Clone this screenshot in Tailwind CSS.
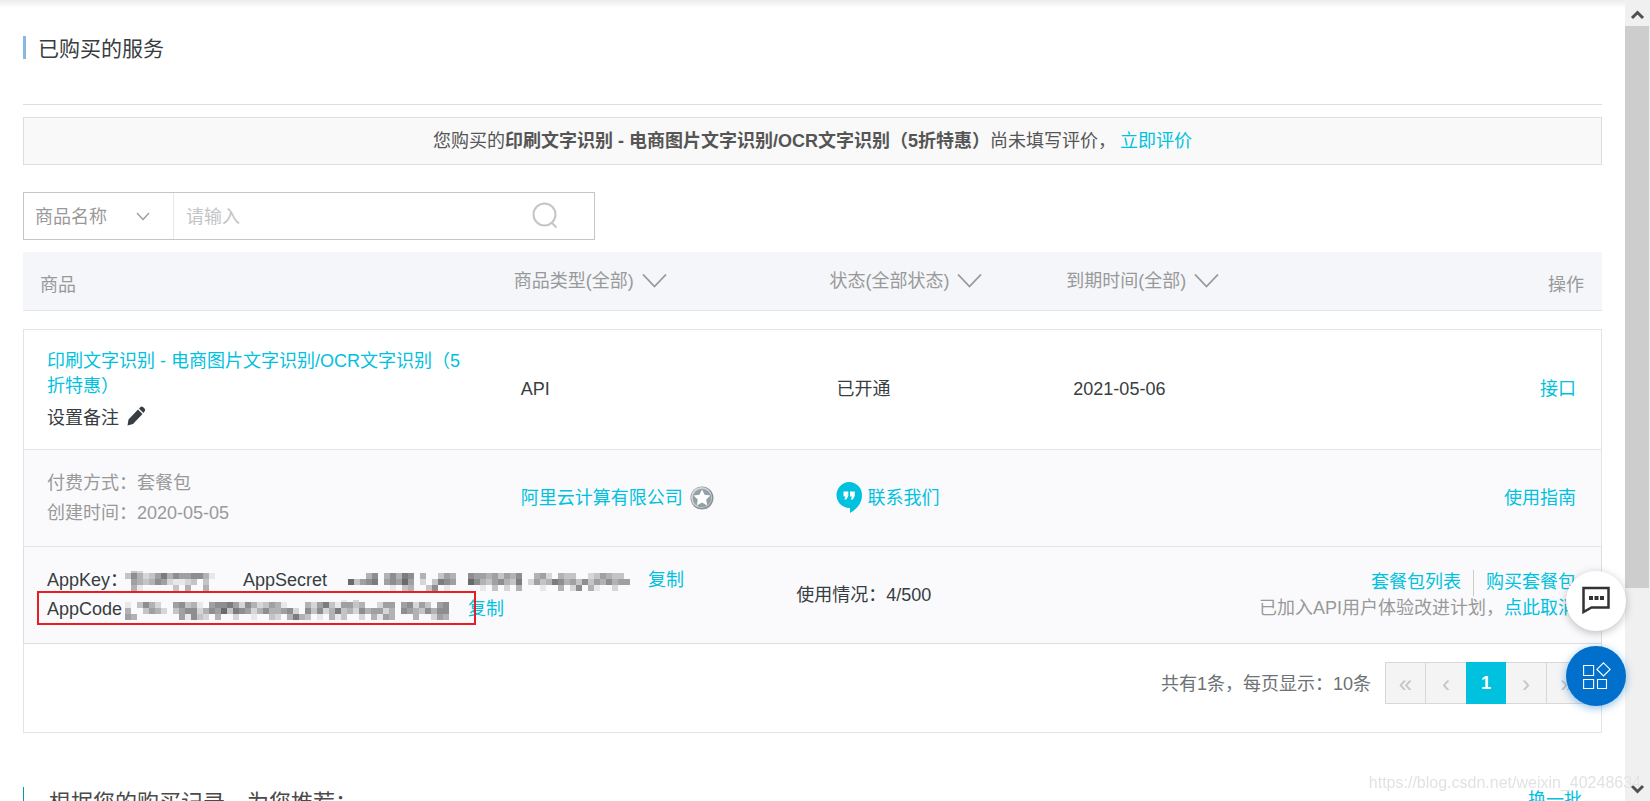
<!DOCTYPE html>
<html lang="zh-CN">
<head>
<meta charset="utf-8">
<title>已购买的服务</title>
<script src="https://cdn.jsdelivr.net/npm/@tailwindcss/browser@4"></script>
</head>
<body class="relative h-screen overflow-hidden bg-white font-['Liberation_Sans','Noto_Sans_CJK_SC',sans-serif] text-[18px] leading-[25px] text-[#373d41]">
<div class="absolute inset-x-0 top-0 h-2 bg-linear-to-b from-[#ececec] to-white"></div>

<main class="relative mr-[25px] pl-[23px] pr-[23px] pt-[34px]">
  <header class="flex h-[71px] items-start border-b border-[#dddddd]">
    <span class="mt-[2px] h-[23px] w-[3px] bg-[#88b7e0]"></span>
    <h1 class="ml-3 text-[21px] leading-[29px]">已购买的服务</h1>
  </header>

  <p class="mt-3 flex h-12 items-center justify-center border border-[#dddddd] bg-[#f9f9f9] text-[#555555]">
    <span>您购买的<b>印刷文字识别 - 电商图片文字识别/OCR文字识别（5折特惠）</b>尚未填写评价，</span>
    <a href="#review" class="ml-1 text-[#00c1de]">立即评价</a>
  </p>

  <form class="mt-[27px] flex h-12 w-[572px] border border-[#c3c5c6]" onsubmit="return false">
    <div class="relative w-[150px] border-r border-[#e6e8ea]">
      <select aria-label="搜索字段" class="h-full w-full appearance-none bg-transparent pl-[11px] pt-[2px] text-[#999999] outline-none">
        <option>商品名称</option>
      </select>
      <svg class="pointer-events-none absolute right-[23px] top-[19px]" width="14" height="9" viewBox="0 0 14 9" fill="none" stroke="#999" stroke-width="1.2"><path d="M1 1l6 6.500 6-6.500"/></svg>
    </div>
    <input type="text" aria-label="搜索内容" placeholder="请输入" class="min-w-0 flex-1 pl-3 pt-[2px] outline-none placeholder:text-[#c3c5c6]">
    <button type="submit" aria-label="搜索" class="mr-[34px]">
      <svg width="28" height="28" viewBox="0 0 28 28" fill="none" stroke="#c3c5c6" stroke-width="2"><circle cx="12.500" cy="12.500" r="11"/><path d="M19.500 20.500l5 5"/></svg>
    </button>
  </form>

  <table class="mt-3 w-full table-fixed border-separate border-spacing-0 text-left">
    <colgroup><col class="w-[30%]"><col class="w-[20%]"><col class="w-[15%]"><col class="w-[15%]"><col class="w-[20%]"></colgroup>
    <thead class="text-[#999999]">
      <tr class="h-[59px] bg-[#f4f6fa]">
        <th class="border-b border-[#dfe5ea] px-[17px] pt-2 font-normal">商品</th>
        <th class="border-b border-[#dfe5ea] pl-[17px] font-normal"><button class="flex items-center gap-2">商品类型(全部)<svg width="25" height="15" viewBox="0 0 25 15" fill="none" stroke="#999" stroke-width="1.800"><path d="M1 .5l11.500 12L24 .5"/></svg></button></th>
        <th class="border-b border-[#dfe5ea] pl-[17px] font-normal"><button class="flex items-center gap-2 whitespace-nowrap">状态(全部状态)<svg width="25" height="15" viewBox="0 0 25 15" fill="none" stroke="#999" stroke-width="1.800"><path d="M1 .5l11.500 12L24 .5"/></svg></button></th>
        <th class="border-b border-[#dfe5ea] pl-[17px] font-normal"><button class="flex items-center gap-2 whitespace-nowrap">到期时间(全部)<svg width="25" height="15" viewBox="0 0 25 15" fill="none" stroke="#999" stroke-width="1.800"><path d="M1 .5l11.500 12L24 .5"/></svg></button></th>
        <th class="border-b border-[#dfe5ea] pr-[18px] pt-2 text-right font-normal">操作</th>
      </tr>
    </thead>
    <tbody>
      <tr class="h-[18px]" aria-hidden="true"><td colspan="5"></td></tr>
      <tr class="h-[121px]">
        <td class="border-y border-l border-[#e1e4e8] pl-[23px] pr-6">
          <a href="#product" class="block text-[#00c1de]">印刷文字识别 - 电商图片文字识别/OCR文字识别（5折特惠）</a>
          <button class="mt-[7px] flex items-center gap-2">设置备注
            <svg class="mb-1" width="19" height="20" viewBox="0 0 19 20" fill="#373d41"><path d="M.5 19.500l1-6L11 3.500l4.500 4.500-9.500 10zM12 2.500l1.600-1.600q1.200-.9 2.400.1l1.700 1.700q1 1.200.1 2.400L16.400 7z"/></svg>
          </button>
        </td>
        <td class="border-y border-[#e1e4e8] pl-6">API</td>
        <td class="border-y border-[#e1e4e8] pl-6">已开通</td>
        <td class="border-y border-[#e1e4e8] pl-6">2021-05-06</td>
        <td class="border-y border-r border-[#e1e4e8] pr-[25px] text-right"><a href="#api" class="text-[#00c1de]">接口</a></td>
      </tr>
      <tr class="h-[97px] bg-[#fafafc]">
        <td class="border-b border-l border-[#dfe5e8] pl-[23px] leading-[30px] text-[#999999]">付费方式：套餐包<br>创建时间：2020-05-05</td>
        <td class="border-b border-[#dfe5e8] pl-6">
          <div class="flex items-center gap-[7px]"><a href="#vendor" class="text-[#00c1de]">阿里云计算有限公司</a>
            <svg width="24" height="24" viewBox="0 0 24 24"><circle cx="12" cy="12" r="11.500" fill="#8d9296"/><circle cx="11.500" cy="11.500" r="10.500" fill="#d3d6d8"/><circle cx="12" cy="12" r="9.300" fill="#93a1a8"/><path d="M12 3.400l2.600 5.300 5.800.8-4.200 4.100 1 5.800-5.200-2.800-5.200 2.800 1-5.800-4.200-4.100 5.800-.8z" fill="#fff"/></svg>
          </div>
        </td>
        <td class="border-b border-[#dfe5e8] pl-6" colspan="2">
          <a href="#contact" class="flex items-center gap-[5px] text-[#00c1de]">
            <svg width="26" height="32" viewBox="0 0 26 32"><path d="M13 0a13 13 0 0 1 13 13c0 8-5 14-12 18v-5A13 13 0 1 1 13 0z" fill="#00c1de"/><path d="M7.500 9.500h4.800v4.500l-2 3.500h-2l1.200-3h-2zM14 9.500h4.800v4.500l-2 3.500h-2l1.200-3h-2z" fill="#fff"/></svg>联系我们</a>
        </td>
        <td class="border-b border-r border-[#dfe5e8] pr-[25px] text-right"><a href="#guide" class="text-[#00c1de]">使用指南</a></td>
      </tr>
      <tr class="h-[97px] bg-[#fafafc]">
        <td colspan="5" class="border-x border-b border-[#dcdee2] pl-[23px] pr-[25px]">
          <div class="flex items-center">
            <div class="relative w-[49%] leading-[29px]">
              <div class="flex items-center">
                <span class="w-[78px] whitespace-nowrap">AppKey：</span>
                <svg data-mosaic="key" class="w-[96px]" height="20" aria-hidden="true"></svg>
                <span class="ml-[22px] w-[88px]">AppSecret</span>
                <svg data-mosaic="secret" class="ml-[17px] w-[284px]" height="20" aria-hidden="true"></svg>
                <a href="#copy-secret" class="ml-4 text-[#00c1de]">复制</a>
              </div>
              <div class="flex items-center">
                <span class="w-[78px]">AppCode</span>
                <svg data-mosaic="code" class="w-[330px]" height="20" aria-hidden="true"></svg>
                <a href="#copy-code" class="ml-[13px] text-[#00c1de]">复制</a>
              </div>
              <div class="pointer-events-none absolute -left-[10px] top-[25px] h-[34px] w-[439px] border-2 border-[#e81c24]"></div>
            </div>
            <div>使用情况：4/500</div>
            <div class="ml-auto flex flex-col items-end">
              <div class="flex items-center text-[#00c1de]"><a href="#packages">套餐包列表</a><span class="mx-3 h-[26px] w-px bg-[#cccccc]"></span><a href="#buy">购买套餐包</a></div>
              <div class="text-[#999999]">已加入API用户体验改进计划，<a href="#cancel" class="text-[#00c1de]">点此取消</a></div>
            </div>
          </div>
        </td>
      </tr>
    </tbody>
  </table>

  <div class="flex h-[89px] items-start justify-end border-x border-b border-[#e1e4e8] pr-[13px] pt-[18px]">
    <span class="mt-[10px] text-[#6d7274]">共有1条，每页显示：10条</span>
    <nav class="ml-[14px] flex h-[42px] border border-[#d7d8d9] bg-[#f4f4f4] text-[24px] text-[#c3c5c6]" aria-label="分页">
      <button class="w-10 border-r border-[#d7d8d9]" aria-label="首页">«</button>
      <button class="w-10" aria-label="上一页">‹</button>
      <button class="-my-px w-10 bg-[#00c1de] pt-px text-[18px] font-bold text-white" aria-current="page">1</button>
      <button class="w-[41px] border-r border-[#d7d8d9]" aria-label="下一页">›</button>
      <button class="w-10" aria-label="末页">»</button>
    </nav>
  </div>

  <section class="mt-[54px] flex items-start border-l border-[#0099ae]">
    <h2 class="ml-[25px] text-[22px] leading-[32px] text-[#4a4a4a]">根据您的购买记录，为您推荐：</h2>
    <a href="#more" class="ml-auto mr-5 mt-px text-[#00c1de]">换一批</a>
  </section>
</main>

<div class="fixed inset-y-0 right-0 flex w-[25px] flex-col bg-[#f0f0f0]" aria-hidden="true">
  <svg width="25" height="26" viewBox="0 0 25 26" fill="none" stroke="#505050" stroke-width="3"><path d="M7 18l5.500-5.500L18 18"/></svg>
  <div class="flex-1 pr-px"><div class="h-3/4 bg-[#cdcdcd]"></div></div>
  <svg width="25" height="26" viewBox="0 0 25 26" fill="none" stroke="#505050" stroke-width="3"><path d="M7 11l5.500 5.500L18 11"/></svg>
</div>

<div class="fixed bottom-[95px] right-[24px] flex flex-col gap-[15px]">
  <button aria-label="咨询" class="flex size-[60px] items-center justify-center rounded-full bg-white pb-[3px] shadow-[0_2px_8px_rgba(0,0,0,0.25)]">
    <svg width="28" height="28" viewBox="0 0 28 28" fill="none" stroke="#333" stroke-width="2.500"><path d="M1.500 2h25v19.500H9.500L1.500 26z"/><path d="M7 12h15" stroke-width="4" stroke-dasharray="4 1.500"/></svg>
  </button>
  <button aria-label="应用" class="flex size-[60px] items-center justify-center rounded-full bg-[#0070cc] pl-[2px] shadow-[0_2px_8px_rgba(0,112,204,0.45)]">
    <svg width="28" height="28" viewBox="0 0 28 28" fill="none" stroke="#fff" stroke-width="1.100"><path d="M.6 3.500h10v10h-10zM.6 17.500h10v9h-10zM14.500 17.500h9v9h-9zM20.500 .8l6.600 6.600-6.600 6.600-6.600-6.600z"/></svg>
  </button>
</div>

<div class="pointer-events-none fixed bottom-[6px] right-[9px] text-[16px] leading-[24px] text-[#e2e2e2] [text-shadow:0_0_1px_#ffffff]">https://blog.csdn.net/weixin_40248634</div>

<script>
// Masked credentials: each digit is a block's darkness, 0 (none) to 9.
const masks = {
  key: ['0320000000000000', '3642357465566410', '0543465211230300', '0410000030400400'],
  secret: ['', '00046046476040035400655453546004520433002354330', '83567056585020376500864356437025347645363546455', '00000001034003601000001030204000100402604100200'],
  code: ['0000000000000000000000000000000000001020000000000000000', '1036420056341056675264235410004257315534002550562530560', '4003542035662465837652464456206362473426455240654364660', '5400000005163204002001003204743010413002041540004002540']
};
for (const svg of document.querySelectorAll('[data-mosaic]')) {
  masks[svg.dataset.mosaic].forEach((row, y) => [...row].forEach((d, x) => {
    if (d === '0') return;
    const r = document.createElementNS('http://www.w3.org/2000/svg', 'rect');
    r.setAttribute('x', x * 6); r.setAttribute('y', y * 6 - 4);
    r.setAttribute('width', 6); r.setAttribute('height', 6);
    const v = 250 - d * 18;
    r.setAttribute('fill', `rgb(${v},${v},${v + 2})`);
    svg.append(r);
  }));
}
</script>
</body>
</html>
